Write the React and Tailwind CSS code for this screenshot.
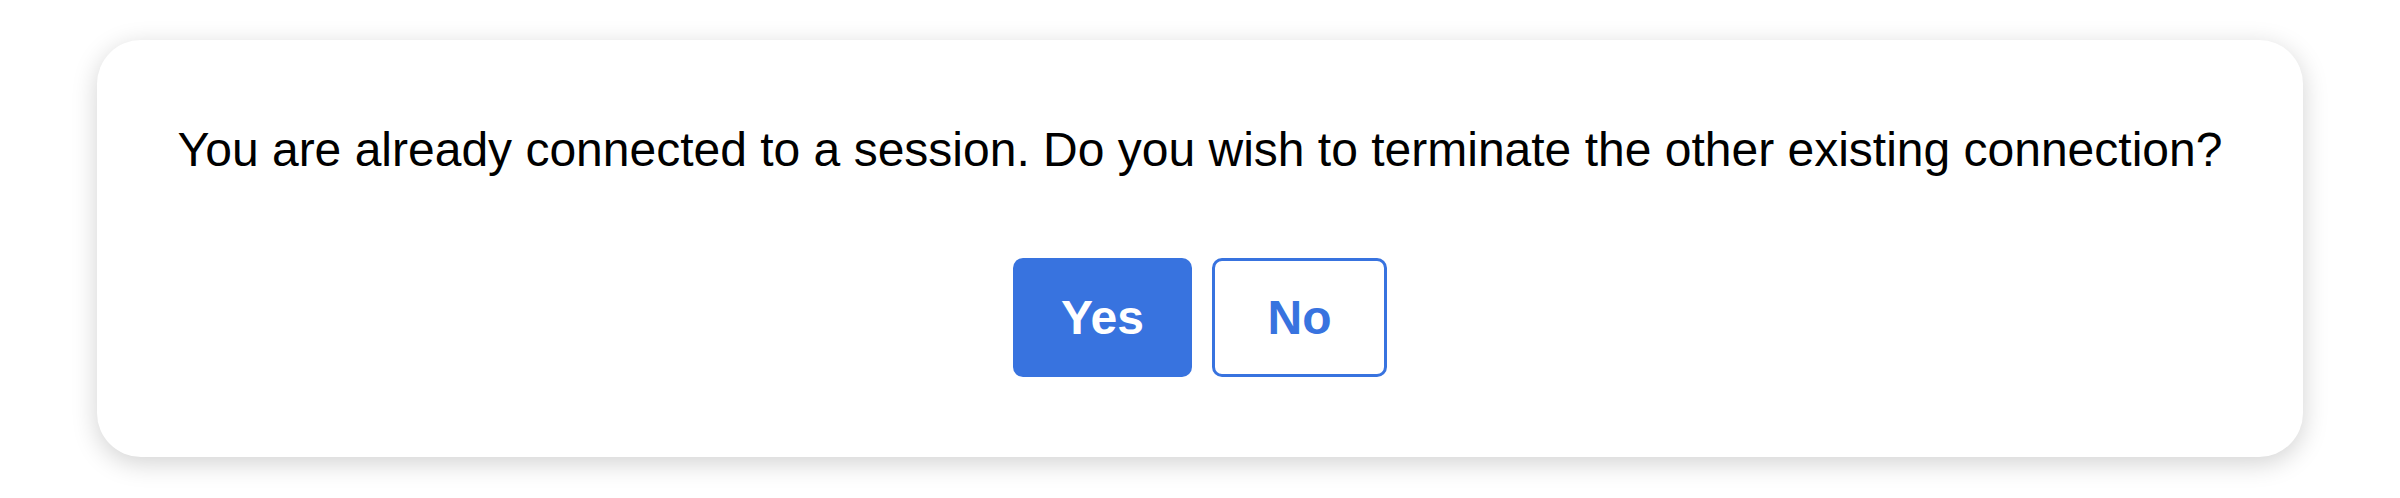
export default function App() {
  return (
    <div className="w-full h-[498px] bg-white px-[97px] py-[40px] font-['Liberation_Sans',Arial,sans-serif]">
      <div className="h-[417px] bg-white rounded-[44px] shadow-[0_6px_26px_rgba(0,0,0,0.18)] flex flex-col items-center pt-[82px]">
        <p className="text-[48px] leading-[55px] text-black">
          You are already connected to a session. Do you wish to terminate the other existing connection?
        </p>
        <div className="flex gap-[20px] mt-[81px]">
          <button className="w-[179px] h-[119px] rounded-[10px] bg-[#3873df] text-white text-[48px] font-bold">
            Yes
          </button>
          <button className="w-[175px] h-[119px] rounded-[10px] border-[3px] border-[#3873df] bg-white text-[#3873df] text-[48px] font-bold">
            No
          </button>
        </div>
      </div>
    </div>
  );
}
